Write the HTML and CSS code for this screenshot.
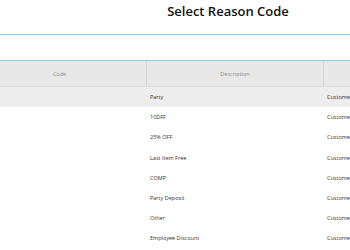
FILE: index.html
```html
<!DOCTYPE html>
<html lang="en">
<head>
    <meta charset="UTF-8">
    <meta name="viewport" content="width=device-width, initial-scale=1.0">
    <title>Select Reason Code</title>
    <link rel="stylesheet" href="styles.css">
</head>
<body>
    <div class="page">
        <h1 class="title">Select Reason Code</h1>

        <div class="search"></div>

        <div class="grid">
            <div class="line head">
                <div class="cell">Code</div>
                <div class="cell">Description</div>
                <div class="cell">Type</div>
            </div>
            <div class="line body selected">
                <div class="cell"></div>
                <div class="cell">Party</div>
                <div class="cell">Customer Discount</div>
            </div>
            <div class="line body">
                <div class="cell"></div>
                <div class="cell">10DFF</div>
                <div class="cell">Customer Discount</div>
            </div>
            <div class="line body">
                <div class="cell"></div>
                <div class="cell">25% OFF</div>
                <div class="cell">Customer Discount</div>
            </div>
            <div class="line body">
                <div class="cell"></div>
                <div class="cell">Last Item Free</div>
                <div class="cell">Customer Discount</div>
            </div>
            <div class="line body">
                <div class="cell"></div>
                <div class="cell">COMP</div>
                <div class="cell">Customer Discount</div>
            </div>
            <div class="line body">
                <div class="cell"></div>
                <div class="cell">Party Deposit</div>
                <div class="cell">Customer Discount</div>
            </div>
            <div class="line body">
                <div class="cell"></div>
                <div class="cell">Other</div>
                <div class="cell">Customer Discount</div>
            </div>
            <div class="line body">
                <div class="cell"></div>
                <div class="cell">Employee Discount</div>
                <div class="cell">Customer Discount</div>
            </div>
        </div>
    </div>
</body>
</html>
```

FILE: styles.css
```css
body {
    margin: 0;
    overflow: hidden;
    background-color: #ffffff;
    font-family: "Open Sans", Arial, sans-serif;
    color: #333;
}
.page {
    width: 510px;
    margin-left: -27px;
}
.title {
    margin: 0;
    height: 34px;
    padding-top: 1px;
    box-sizing: border-box;
    text-align: center;
    font-size: 13px;
    font-weight: 600;
    line-height: 20px;
    color: #111;
}
.search {
    height: 25px;
    border-top: 1px solid #8fd1ee;
    border-bottom: 1px solid #8fd1ee;
}
.grid {
    display: flex;
    flex-direction: column;
}
.grid .line {
    display: grid;
    grid-template-columns: 174px 177px 159px;
}
.grid .head {
    height: 25px;
    background-color: #e8e8e8;
    border-bottom: 1px solid #dcdcdc;
    font-size: 5.5px;
    color: #8a8a8a;
}
.grid .head .cell {
    display: flex;
    align-items: center;
    justify-content: center;
    border-right: 1px solid #d6d6d6;
}
.grid .body {
    height: 20.2px;
    font-size: 5.5px;
    color: #333;
}
.grid .body .cell {
    display: flex;
    align-items: center;
    padding-left: 3px;
    white-space: nowrap;
}
.grid .selected {
    background-color: #ededed;
}
```
